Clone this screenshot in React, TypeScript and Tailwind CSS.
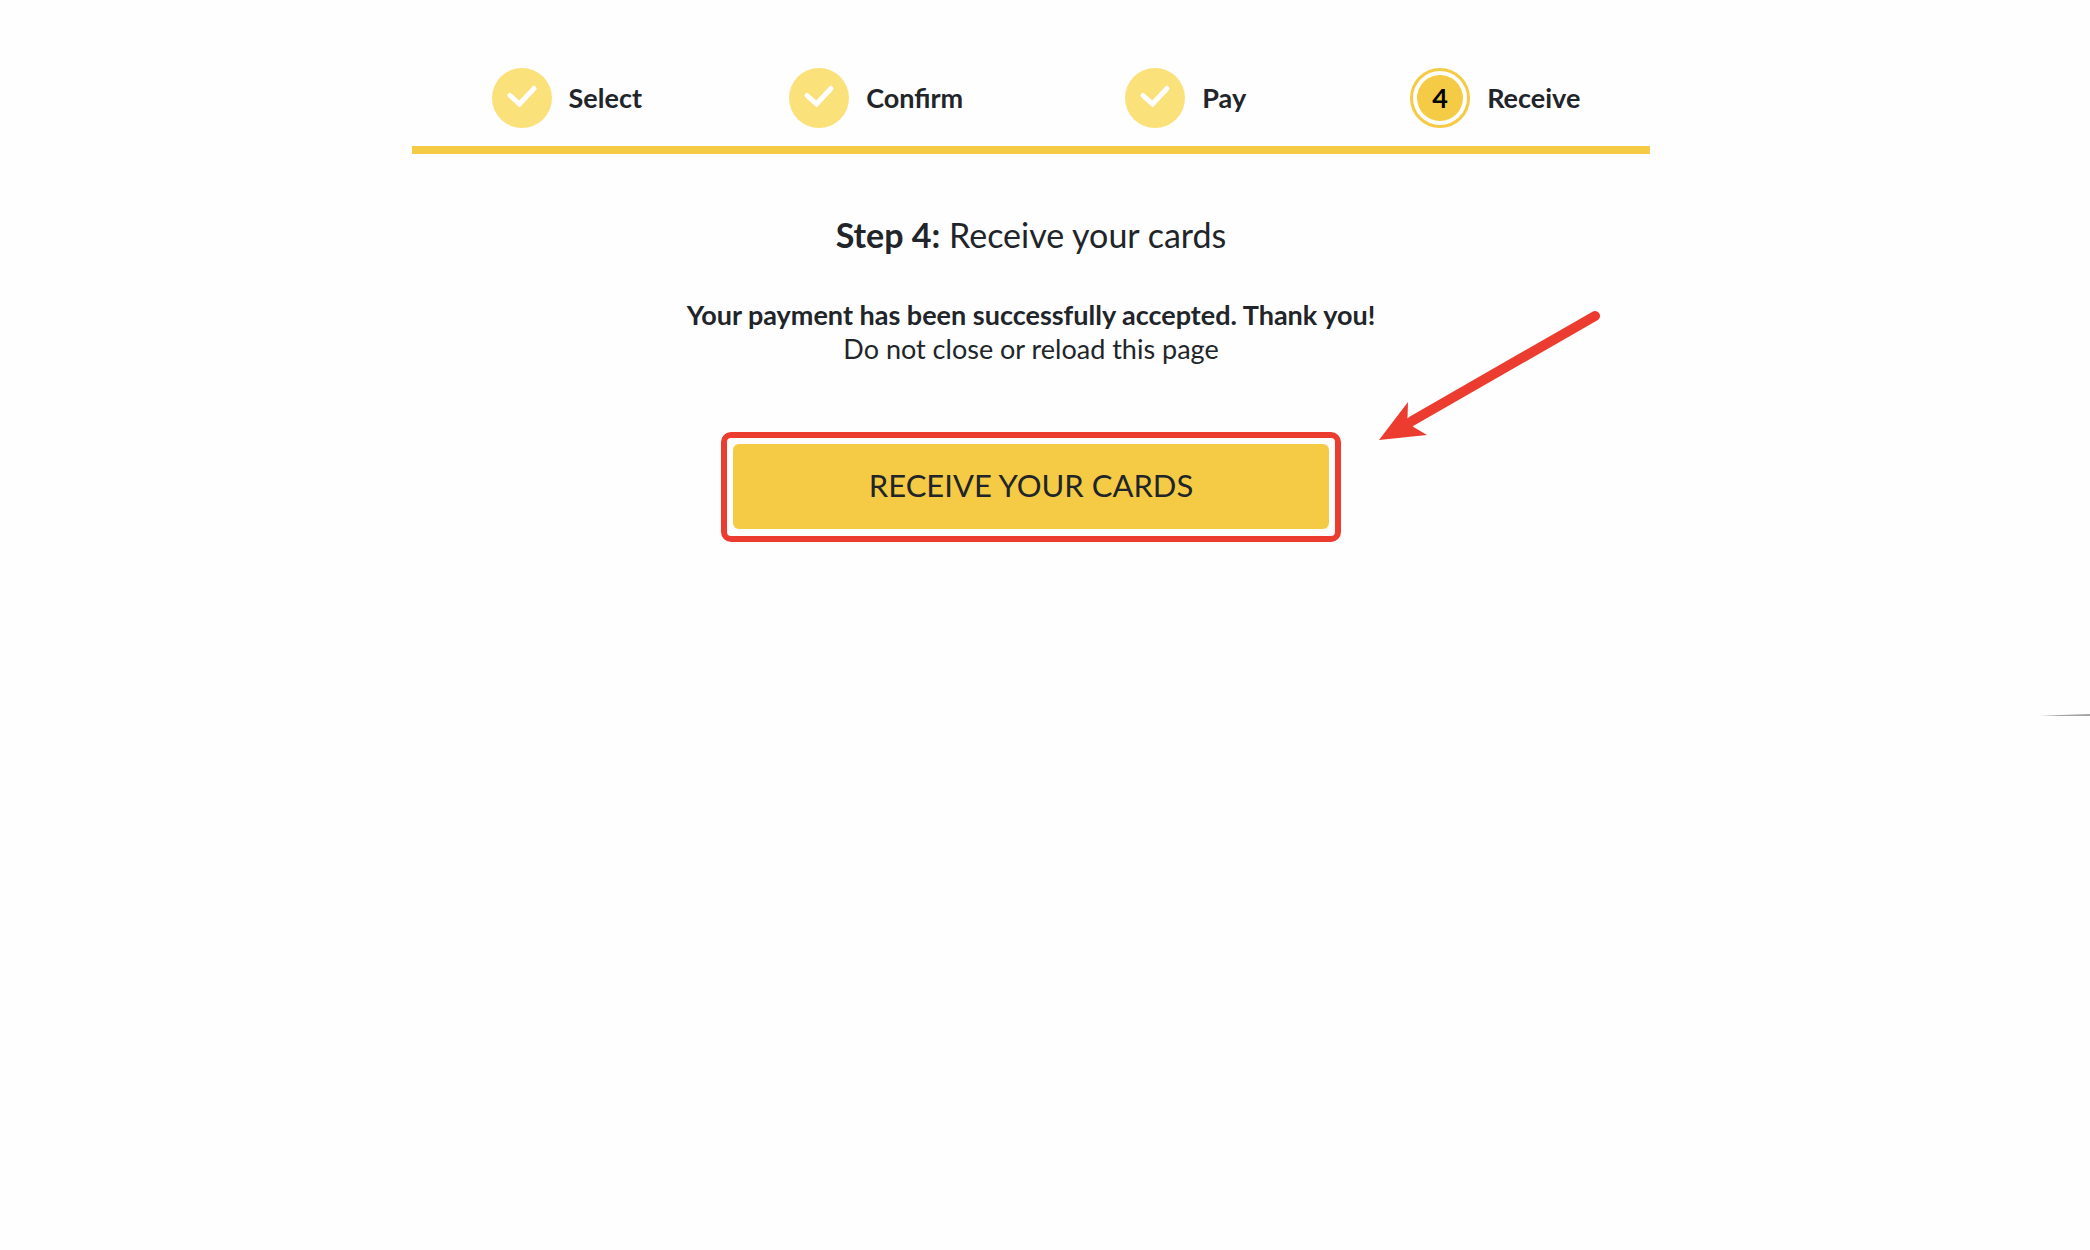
import React from "react";

const steps = [
  { number: 1, label: "Select", done: true },
  { number: 2, label: "Confirm", done: true },
  { number: 3, label: "Pay", done: true },
  { number: 4, label: "Receive", done: false },
];

const CheckIcon: React.FC = () => (
  <svg viewBox="0 0 60 60" className="w-full h-full" aria-hidden="true">
    <path
      d="M18 27.5 L27.5 36 L42 20.5"
      fill="none"
      stroke="#ffffff"
      strokeWidth="5"
      strokeLinecap="round"
    />
  </svg>
);

const StepBar: React.FC = () => (
  <ol className="grid grid-cols-4 pb-[18px] border-b-8 border-[#f5cb45]">
    {steps.map((step) => (
      <li key={step.number} className="flex items-center justify-center gap-[17px]">
        {step.done ? (
          <span className="w-[60px] h-[60px] rounded-full bg-[#fbe17a]">
            <CheckIcon />
          </span>
        ) : (
          <span className="w-[60px] h-[60px] rounded-full border-3 border-[#f5cb45] p-1">
            <span className="flex items-center justify-center w-full h-full rounded-full bg-[#f5cb45] text-[27px] leading-8 font-bold text-black">
              {step.number}
            </span>
          </span>
        )}
        <span className="text-[27px] leading-8 font-bold">{step.label}</span>
      </li>
    ))}
  </ol>
);

const Arrow: React.FC = () => (
  <svg
    viewBox="0 0 224 132"
    className="absolute left-full bottom-full w-[224px] h-[132px] ml-[43px] -mb-0.5"
    aria-hidden="true"
  >
    <path
      d="M217 8 L34 113"
      stroke="#ec3c2f"
      strokeWidth="10"
      strokeLinecap="round"
    />
    <path d="M1 132 L30 94 L29.5 110 L35.5 119 L49 127 Z" fill="#ec3c2f" />
  </svg>
);

const App: React.FC = () => {
  return (
    <div className="relative min-h-screen bg-[#fefefe] pt-[68px] pl-4 pr-11 font-['Lato',sans-serif] text-[#212529]">
      <main className="max-w-[1238px] mx-auto">
        <StepBar />

        <section className="flex flex-col items-center text-center">
          <h1 className="mt-[59px] text-[34px] leading-[44px]">
            <b>Step 4:</b> Receive your cards
          </h1>
          <p className="mt-[41px] text-[27px] leading-[34px]">
            <b>Your payment has been successfully accepted. Thank you!</b>
            <br />
            Do not close or reload this page
          </p>

          <div className="relative w-full max-w-[620px] mt-[66px] p-1.5 pb-[7px] border-6 border-[#ec3c2f] rounded-[10px]">
            <button
              type="button"
              className="block w-full h-[85px] pb-0.5 rounded-md bg-[#f5cb45] text-[31px]"
            >
              RECEIVE YOUR CARDS
            </button>
            <Arrow />
          </div>
        </section>
      </main>

      {/* faint curve entering from the right edge */}
      <svg
        viewBox="0 0 50 4"
        className="absolute right-0 top-[713px] w-[50px] h-1"
        aria-hidden="true"
      >
        <path d="M0 3 L20 2 L50 1 L50 3 Z" fill="#a3a3a3" />
      </svg>
    </div>
  );
};

export default App;
